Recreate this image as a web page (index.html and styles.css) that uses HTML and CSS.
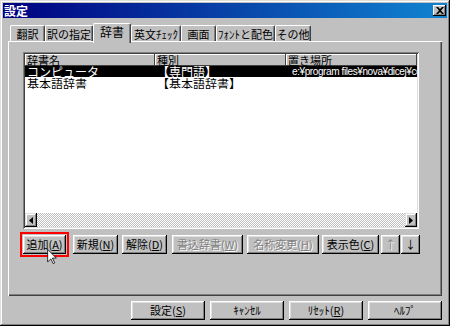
FILE: index.html
```html
<!DOCTYPE html>
<html lang="ja">
<head>
    <meta charset="UTF-8">
    <title>設定</title>
    <link rel="stylesheet" href="styles.css">
</head>
<body>
    <div class="window">
        <div class="titlebar">
            <span class="title">設定</span>
            <span class="close">
                <svg width="8" height="7" viewBox="0 0 8 7"><path d="M0 0h2l2 2 2-2h2L5 3.5 8 7H6L4 5 2 7H0l3-3.5z" fill="#000"/></svg>
            </span>
        </div>

        <div class="tabs">
            <div class="tab w1">翻訳</div>
            <div class="tab w2">訳の指定</div>
            <div class="tab w3 active">辞書</div>
            <div class="tab w4">英文ﾁｪｯｸ</div>
            <div class="tab w5">画面</div>
            <div class="tab w6">ﾌｫﾝﾄと配色</div>
            <div class="tab w7">その他</div>
        </div>

        <div class="panel">
            <div class="list">
                <div class="list-head">
                    <div class="col c1">辞書名</div>
                    <div class="col c2">種別</div>
                    <div class="col c3">置き場所</div>
                </div>
                <div class="list-body">
                    <div class="row selected">
                        <div class="cell c1">コンピュータ</div>
                        <div class="cell c2">【専門語】</div>
                        <div class="cell c3 path">e:¥program files¥nova¥dicej¥computer.dic</div>
                    </div>
                    <div class="row">
                        <div class="cell c1">基本語辞書</div>
                        <div class="cell c2">【基本語辞書】</div>
                        <div class="cell c3"></div>
                    </div>
                </div>
                <div class="hscroll">
                    <div class="sbtn">
                        <svg width="4" height="7" viewBox="0 0 4 7"><path d="M4 0v7L0 3.5z" fill="#000"/></svg>
                    </div>
                    <div class="track"></div>
                    <div class="sbtn">
                        <svg width="4" height="7" viewBox="0 0 4 7"><path d="M0 0v7l4-3.5z" fill="#000"/></svg>
                    </div>
                </div>
            </div>

            <div class="actions">
                <button class="btn b-add focus">追加(<u>A</u>)</button>
                <button class="btn b-new">新規(<u>N</u>)</button>
                <button class="btn b-del">解除(<u>D</u>)</button>
                <button class="btn b-write" disabled>書込辞書(<u>W</u>)</button>
                <button class="btn b-rename" disabled>名称変更(<u>H</u>)</button>
                <button class="btn b-color">表示色(<u>C</u>)</button>
                <button class="btn b-up" disabled>↑</button>
                <button class="btn b-down">↓</button>
            </div>
        </div>

        <div class="footer">
            <button class="btn wide">設定(<u>S</u>)</button>
            <button class="btn wide">ｷｬﾝｾﾙ</button>
            <button class="btn wide">ﾘｾｯﾄ(<u>R</u>)</button>
            <button class="btn wide">ﾍﾙﾌﾟ</button>
        </div>

        <!-- マウスカーソル -->
        <svg class="cursor" width="10" height="15" viewBox="0 0 12 19">
            <path d="M0.5 0.5V16.5L4.5 12.5L7.5 18.5L9.5 17.5L6.5 11.5H11.5Z" fill="#fff" stroke="#000" stroke-width="1"/>
        </svg>
    </div>
</body>
</html>
```

FILE: styles.css
```css
/* ダイアログ全体 */
body {
    margin: 0;
    padding: 0;
    background-color: #c0c0c0;
    font-family: "Noto Sans CJK JP", sans-serif;
    font-size: 11px;
    color: #000;
}

.window {
    position: relative;
    width: 450px;
    height: 326px;
    box-sizing: border-box;
    padding: 3px;
    background-color: #c0c0c0;
    box-shadow: inset -1px -1px #000, inset 1px 1px #dfdfdf,
                inset -2px -2px #808080, inset 2px 2px #fff;
}

/* タイトルバー */
.titlebar {
    display: flex;
    align-items: center;
    justify-content: space-between;
    height: 15px;
    padding-left: 1px;
    background: linear-gradient(to right, #000080, #1084d0);
    color: #fff;
}

.title {
    font-size: 12px;
    font-weight: bold;
    line-height: 15px;
}

.close {
    display: flex;
    align-items: center;
    justify-content: center;
    width: 13px;
    height: 11px;
    margin-right: 1px;
    background-color: #c0c0c0;
    box-shadow: inset -1px -1px #000, inset 1px 1px #fff, inset -2px -2px #808080;
}

/* タブ */
.tabs {
    display: flex;
    align-items: flex-end;
    height: 18px;
    margin-top: 5px;
    padding-left: 7px;
}

.tab {
    height: 16px;
    box-sizing: border-box;
    padding-top: 1px;
    text-align: center;
    line-height: 14px;
    border-top: 1px solid #fff;
    border-left: 1px solid #fff;
    border-right: 1px solid #404040;
    border-radius: 2px 2px 0 0;
    box-shadow: inset -1px 0 #808080;
    background-color: #c0c0c0;
    white-space: nowrap;
}

.tab.active {
    position: relative;
    z-index: 1;
    height: 20px;
    margin-bottom: -2px;
    font-size: 12px;
}

.w1 { width: 35px; }
.w2 { width: 48px; }
.w3 { width: 38px; }
.w4 { width: 50px; }
.w5 { width: 35px; }
.w6 { width: 59px; }
.w7 { width: 36px; }

/* タブの中身 */
.panel {
    width: 434px;
    height: 255px;
    box-sizing: border-box;
    margin-left: 5px;
    padding: 11px 0 0 15px;
    box-shadow: inset 1px 1px #fff, inset -1px -1px #404040,
                inset -2px -2px #808080;
}

.list {
    display: flex;
    flex-direction: column;
    width: 396px;
    height: 177px;
    box-sizing: border-box;
    padding: 2px;
    background-color: #fff;
    box-shadow: inset 1px 1px #808080, inset -1px -1px #fff,
                inset 2px 2px #404040, inset -2px -2px #dfdfdf;
}

.list-head {
    display: flex;
    height: 12px;
}

.col {
    height: 12px;
    box-sizing: border-box;
    padding-left: 2px;
    font-size: 11px;
    line-height: 12px;
    overflow: hidden;
    white-space: nowrap;
    background-color: #c0c0c0;
    box-shadow: inset -1px -1px #404040, inset 1px 1px #fff;
}

.c1 { width: 130px; }
.c2 { width: 131px; }
.c3 { flex: 1; min-width: 0; }

.list-body {
    flex: 1;
}

.row {
    display: flex;
    height: 11px;
    line-height: 11px;
    font-size: 12px;
}

.row + .row {
    margin-top: 1px;
}

.row.selected {
    background-color: #000;
    color: #fff;
}

.cell {
    box-sizing: border-box;
    padding-left: 2px;
    overflow: hidden;
    white-space: nowrap;
}

.path {
    padding-left: 6px;
    font-family: "Liberation Sans", sans-serif;
    font-size: 10px;
    letter-spacing: -0.4px;
}

/* 横スクロールバー */
.hscroll {
    display: flex;
    height: 14px;
}

.sbtn {
    display: flex;
    align-items: center;
    justify-content: center;
    width: 12px;
    background-color: #c0c0c0;
    box-shadow: inset -1px -1px #000, inset 1px 1px #dfdfdf,
                inset -2px -2px #808080, inset 2px 2px #fff;
}

.track {
    flex: 1;
    background: repeating-conic-gradient(#c0c0c0 0 25%, #fff 0 50%) 0 0 / 2px 2px;
}

/* ボタン */
.btn {
    height: 19px;
    box-sizing: border-box;
    padding: 0;
    border: none;
    background-color: #c0c0c0;
    font-family: inherit;
    font-size: 11px;
    line-height: 17px;
    color: #000;
    text-align: center;
    white-space: nowrap;
    box-shadow: inset -1px -1px #000, inset 1px 1px #fff,
                inset -2px -2px #808080, inset 2px 2px #dfdfdf;
}

.btn u {
    text-underline-offset: 1px;
}

.btn:disabled {
    color: #808080;
    text-shadow: 1px 1px #fff;
}

.actions {
    display: flex;
    margin-top: 6px;
}

.b-add { width: 43px; }
.b-new { width: 45px; margin-left: 7px; }
.b-del { width: 45px; margin-left: 4px; }
.b-write { width: 71px; margin-left: 5px; }
.b-rename { width: 72px; margin-left: 4px; }
.b-color { width: 57px; margin-left: 3px; }
.b-up { width: 19px; margin-left: 2px; }
.b-down { width: 19px; margin-left: 1px; }

.focus {
    outline: 2px solid #f00;
    outline-offset: 1px;
}

.footer {
    display: flex;
    justify-content: flex-end;
    gap: 5px;
    margin-top: 5px;
    padding-right: 5px;
}

.wide {
    width: 74px;
}

.cursor {
    position: absolute;
    left: 47px;
    top: 249px;
}
```
